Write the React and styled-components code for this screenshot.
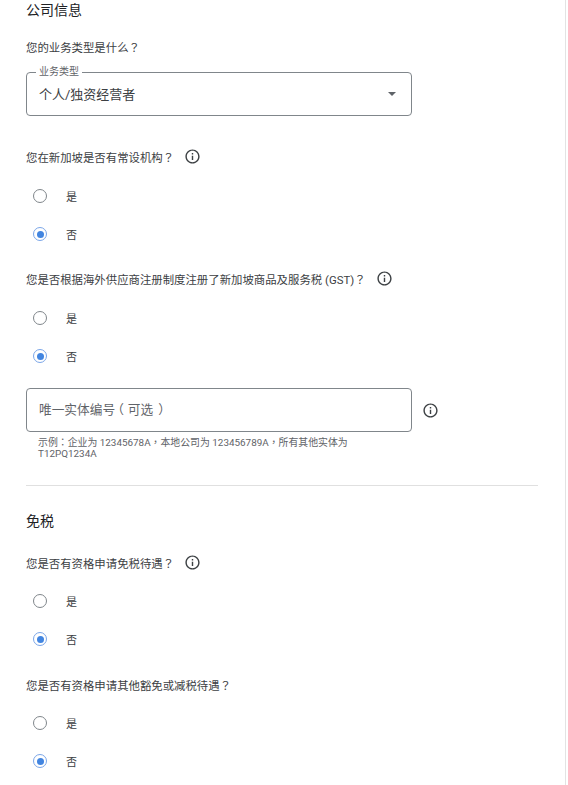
import React from "react";
import styled, { createGlobalStyle } from "styled-components";

const FONT = `Roboto, "Noto Sans CJK SC", sans-serif`;

const GlobalStyle = createGlobalStyle`
  html, body {
    margin: 0;
    padding: 0;
    background: #fff;
  }
  body {
    font-family: ${FONT};
    color: #3c4043;
    text-spacing-trim: space-all;
  }
`;

const Page = styled.div`
  width: 566px;
  height: 785px;
  overflow: hidden;
  box-sizing: border-box;
  padding: 0 27px 0 26px;
  border-right: 1px solid #e3e3e3;
`;

const Section = styled.section`
  display: flex;
  flex-direction: column;
`;

const Title = styled.h2`
  margin: ${(p) => p.$top || 0}px 0 0;
  height: 20px;
  font-size: 14px;
  line-height: 20px;
  font-weight: 400;
  color: #202124;
`;

const Question = styled.div`
  display: flex;
  align-items: center;
  height: 20px;
  margin-top: ${(p) => p.$top}px;
  font-size: 11.4px;
  color: #3c4043;
`;

// the reference centres full-width punctuation in its cell
const Punct = styled.span`
  font-family: Roboto, "Noto Sans CJK TC", sans-serif;
`;

const Paren = styled(Punct)`
  display: inline-block;
  transform: translateX(${(p) => p.$shift}px);
`;

const InfoButton = styled.svg`
  width: 17px;
  height: 17px;
  margin-left: ${(p) => p.$gap}px;
  margin-top: ${(p) => p.$lift}px;
  flex: none;
  color: #3c4043;
`;

const InfoIcon = ({ gap = 10, lift = -2 }) => (
  <InfoButton $gap={gap} $lift={lift} viewBox="0 0 24 24" fill="currentColor">
    <path d="M11 7h2v2h-2zm0 4h2v6h-2zm1-9C6.480 2 2 6.480 2 12s4.480 10 10 10 10-4.480 10-10S17.520 2 12 2zm0 18c-4.410 0-8-3.590-8-8s3.590-8 8-8 8 3.590 8 8-3.590 8-8 8z" />
  </InfoButton>
);

const Outlined = styled.div`
  position: relative;
  box-sizing: border-box;
  width: 386px;
  height: 44px;
  display: flex;
  align-items: center;
  justify-content: space-between;
  padding: 0 12px;
  border: 1px solid #80868b;
  border-radius: 4px;
  background: #fff;
`;

const FloatLabel = styled.span`
  position: absolute;
  top: -7px;
  left: 9px;
  padding: 0 3px;
  background: #fff;
  font-size: 10px;
  line-height: 12px;
  color: #5f6368;
`;

const Value = styled.span`
  font-size: 13px;
  margin-top: -2px;
  color: #3c4043;
`;

const Placeholder = styled.span`
  font-size: 12.7px;
  margin-top: -3px;
  color: #5f6368;
`;

const Arrow = styled.span`
  width: 0;
  height: 0;
  border-left: 4px solid transparent;
  border-right: 4px solid transparent;
  border-top: 4px solid #5f6368;
  margin: -1px 3px 0 0;
`;

const RadioGroup = styled.div`
  display: flex;
  flex-direction: column;
  gap: 10px;
  margin-top: ${(p) => p.$top}px;
  padding-left: 7px;
`;

const RadioRow = styled.label`
  display: flex;
  align-items: center;
  height: 28px;
  font-size: 11px;
  color: #3c4043;
`;

const RadioMark = styled.span`
  box-sizing: border-box;
  width: 14px;
  height: 14px;
  margin-right: 19px;
  border-radius: 50%;
  border: 1.5px solid ${(p) => (p.$on ? "#7ba6e8" : "#80868b")};
  display: flex;
  align-items: center;
  justify-content: center;
  &::after {
    content: "";
    width: 7px;
    height: 7px;
    border-radius: 50%;
    background: ${(p) => (p.$on ? "#4285e0" : "transparent")};
  }
`;

const YesNo = ({ top }) => (
  <RadioGroup $top={top}>
    <RadioRow>
      <RadioMark />是
    </RadioRow>
    <RadioRow>
      <RadioMark $on />否
    </RadioRow>
  </RadioGroup>
);

const FieldRow = styled.div`
  display: flex;
  align-items: center;
  margin-top: ${(p) => p.$top}px;
`;

const Helper = styled.div`
  width: 330px;
  margin: 5px 0 0 12px;
  font-size: 9.9px;
  line-height: 11px;
  color: #5f6368;
`;

const Divider = styled.hr`
  margin: 26px 0 0;
  border: 0;
  border-top: 1px solid #e0e0e0;
`;

export default function App() {
  return (
    <>
      <GlobalStyle />
      <Page>
        <Section>
          <Title>公司信息</Title>
          <Question $top={17}>
            您的业务类型是什么<Punct>？</Punct>
          </Question>
          <FieldRow $top={15}>
            <Outlined>
              <FloatLabel>业务类型</FloatLabel>
              <Value>个人/独资经营者</Value>
              <Arrow />
            </Outlined>
          </FieldRow>
          <Question $top={31}>
            您在新加坡是否有常设机构<Punct>？</Punct>
            <InfoIcon />
          </Question>
          <YesNo top={15} />
          <Question $top={21}>
            您是否根据海外供应商注册制度注册了新加坡商品及服务税 (GST)<Punct>？</Punct>
            <InfoIcon />
          </Question>
          <YesNo top={15} />
          <FieldRow $top={18}>
            <Outlined>
              <Placeholder>
                唯一实体编号<Paren $shift={-4}>（</Paren>可选<Paren $shift={5}>）</Paren>
              </Placeholder>
            </Outlined>
            <InfoIcon gap={10} lift={0} />
          </FieldRow>
          <Helper>
            示例<Punct>：</Punct>企业为 12345678A<Punct>，</Punct>本地公司为 123456789A<Punct>，</Punct>所有其他实体为 T12PQ1234A
          </Helper>
        </Section>
        <Divider />
        <Section>
          <Title $top={25}>免税</Title>
          <Question $top={22}>
            您是否有资格申请免税待遇<Punct>？</Punct>
            <InfoIcon />
          </Question>
          <YesNo top={14} />
          <Question $top={22}>
            您是否有资格申请其他豁免或减税待遇<Punct>？</Punct>
          </Question>
          <YesNo top={14} />
        </Section>
      </Page>
    </>
  );
}
